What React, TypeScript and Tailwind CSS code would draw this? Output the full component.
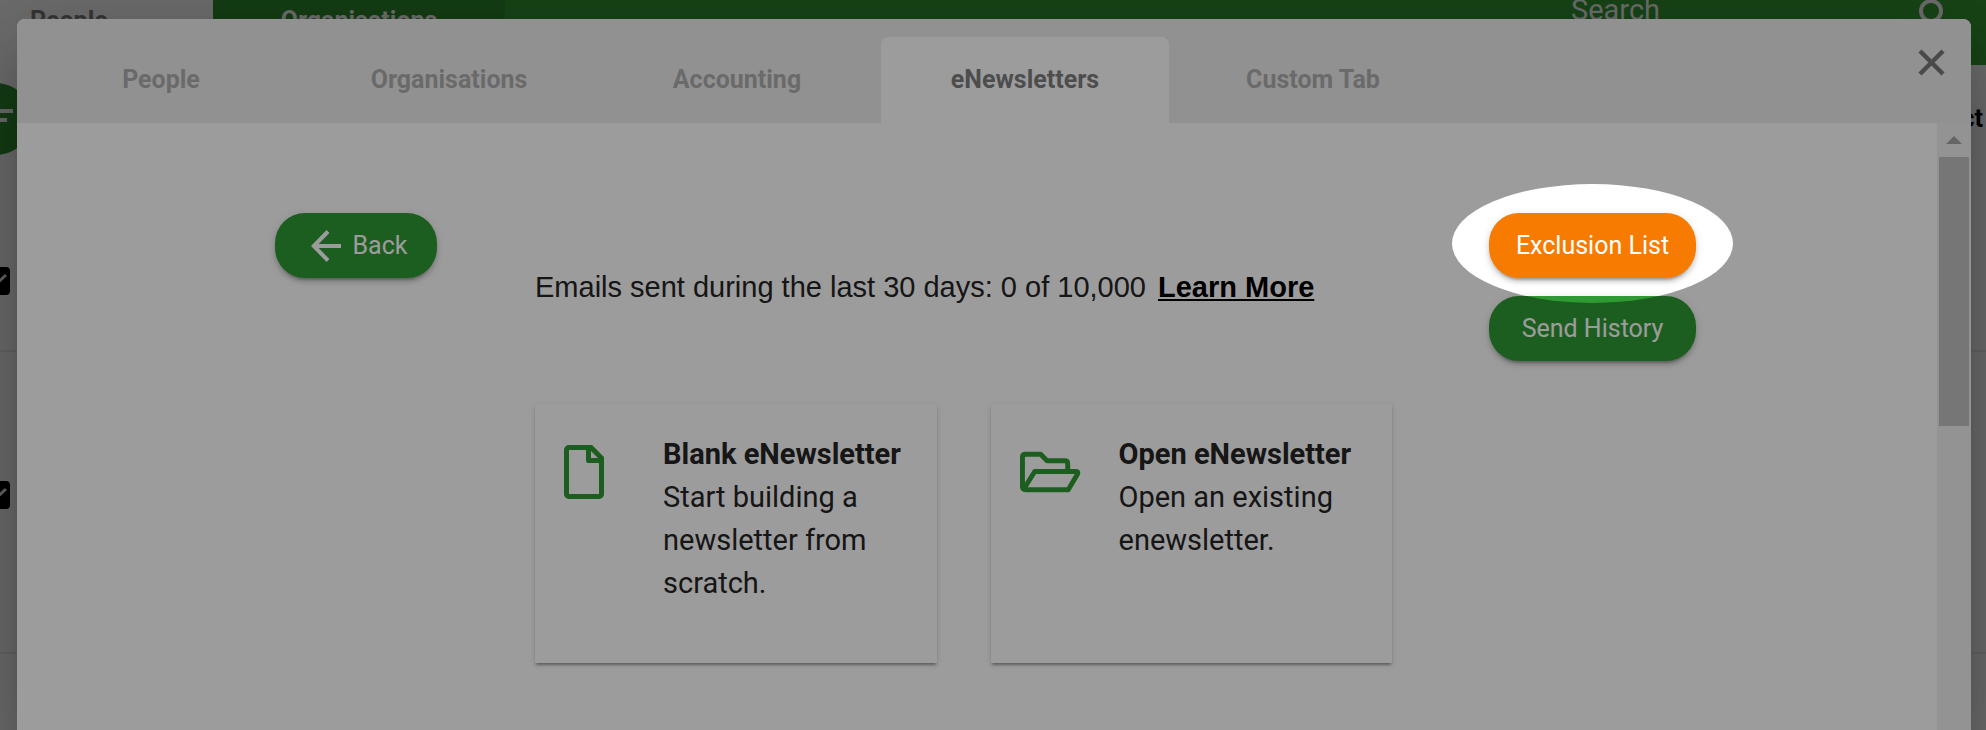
import { ReactNode } from "react";
import clsx from "clsx";

const TABS = ["People", "Organisations", "Accounting", "eNewsletters", "Custom Tab"];

const buttonShadow =
  "shadow-[0_6px_2px_-4px_rgba(0,0,0,0.2),0_4px_4px_0_rgba(0,0,0,0.14),0_2px_10px_0_rgba(0,0,0,0.12)]";

const FileIcon = () => (
  <svg width="40" height="54" viewBox="0 0 40 54" fill="none" stroke="currentColor" strokeWidth="5" aria-hidden="true">
    <path d="M5 2.5H27L37.500 13V49a2.500 2.500 0 0 1-2.500 2.500H5A2.500 2.500 0 0 1 2.500 49V5A2.500 2.500 0 0 1 5 2.500Z" />
    <path d="M24.500 3V15.500H37.500" strokeLinejoin="round" />
  </svg>
);

const FolderIcon = () => (
  <svg width="61" height="42" viewBox="0 0 62 42" fill="none" stroke="currentColor" strokeWidth="5" strokeLinejoin="round" aria-hidden="true">
    <path d="M48.500 20V12.500Q48.500 9.500 45.500 9.500H27.500L21 3H6Q2.500 3 2.500 6V36Q2.500 39 6 39H49L58.500 23Q59.500 20.500 57 20.500H15L4 38" />
  </svg>
);

const BackArrow = () => (
  <svg width="30" height="32" viewBox="0 0 30 32" fill="none" stroke="currentColor" strokeWidth="4" aria-hidden="true">
    <path d="M30 16H3M17 1.500L2.800 16L17 30.500" />
  </svg>
);

interface PillButtonProps {
  children: ReactNode;
  className?: string;
}

function PillButton({ children, className }: PillButtonProps) {
  return (
    <button
      type="button"
      className={clsx(
        "flex h-[65px] items-center justify-center gap-3 rounded-[30px] text-[25px] text-white",
        buttonShadow,
        className
      )}
    >
      {children}
    </button>
  );
}

interface OptionCardProps {
  icon: ReactNode;
  title: string;
  text: string;
}

function OptionCard({ icon, title, text }: OptionCardProps) {
  return (
    <a
      href="#"
      className="flex min-h-[259px] flex-1 items-start bg-white pt-[29px] pr-6 pl-[29px] shadow-[0_4px_2px_-2px_rgba(0,0,0,0.2),0_2px_2px_0_rgba(0,0,0,0.14),0_2px_6px_0_rgba(0,0,0,0.12)]"
    >
      <span className="flex h-[78px] w-[99px] shrink-0 items-center text-[#2f9a33]">{icon}</span>
      <span className="text-[29px] leading-[43px] text-[#242424]">
        <strong className="block font-bold whitespace-nowrap">{title}</strong>
        {text}
      </span>
    </a>
  );
}

function RowCheckbox({ label }: { label: string }) {
  return (
    <label className="relative -ml-[18px] block size-7">
      <input type="checkbox" defaultChecked aria-label={label} className="block size-7 appearance-none rounded-sm bg-black" />
      <svg className="absolute inset-0" width="28" height="28" viewBox="0 0 28 28" fill="none" stroke="#a3a3a3" strokeWidth="3" aria-hidden="true">
        <path d="M5 14L11 20L24 8" />
      </svg>
    </label>
  );
}

// The list page that sits behind the dialog
function ListPage() {
  return (
    <div className="min-h-screen bg-[#b0b0b0] text-[25px] font-bold">
      <header className="flex h-[65px] bg-[#266f24]">
        <a href="#" className="w-[213px] bg-[#b0b0b0] pl-[30px] leading-[42px] text-[#585858]">People</a>
        <a href="#" className="w-[292px] bg-[#216421] text-center leading-[42px] text-[#b0b0b0]">Organisations</a>
        <div className="ml-auto flex h-10 items-start gap-1 pr-[41px] text-[#b0b0b0]">
          <input
            type="text"
            placeholder="Search"
            aria-label="Search"
            className="h-[21px] w-[342px] text-[29px] font-normal placeholder:text-[#b0b0b0]"
          />
          <svg width="28" height="36" viewBox="0 0 28 36" fill="none" stroke="currentColor" strokeWidth="4" aria-hidden="true">
            <circle cx="14" cy="11" r="10" />
            <path d="M20 18L27 27" />
          </svg>
        </div>
      </header>
      <div className="flex h-[108px] items-center justify-between">
        <button type="button" aria-label="Filter" className="-ml-10 flex size-[72px] items-center justify-center rounded-full bg-[#216421]">
          <svg width="50" height="30" viewBox="0 0 50 30" stroke="#b0b0b0" strokeWidth="4" aria-hidden="true">
            <path d="M0 7H42M5 16H36M12 25H29" />
          </svg>
        </button>
        <span className="pr-[3px] text-black">Contact</span>
      </div>
      <div className="h-[179px] border-b-2 border-[#a4a4a4] pt-[94px]">
        <RowCheckbox label="Select first contact" />
      </div>
      <div className="h-[302px] border-b-2 border-[#a4a4a4] pt-[129px]">
        <RowCheckbox label="Select second contact" />
      </div>
    </div>
  );
}

function TabBar() {
  return (
    <div className="flex h-[104px] items-end justify-between rounded-t-lg bg-[#eeeeee]">
      <div role="tablist" className="flex w-[1440px]">
        {TABS.map((tab) => {
          const active = tab === "eNewsletters";
          return (
            <button
              key={tab}
              type="button"
              role="tab"
              aria-selected={active}
              className={clsx(
                "h-[86px] flex-1 rounded-t-lg text-[25px] font-bold",
                active ? "bg-white text-[#7f7f7f]" : "text-[#aeaeae]"
              )}
            >
              {tab}
            </button>
          );
        })}
      </div>
      <button type="button" aria-label="Close" className="mr-[26px] self-start pt-[30px] text-[#787878]">
        <svg width="27" height="27" viewBox="0 0 27 27" stroke="currentColor" strokeWidth="4.500" aria-hidden="true">
          <path d="M2 2L25 25M25 2L2 25" />
        </svg>
      </button>
    </div>
  );
}

function ScrollTrack() {
  return (
    <div className="flex w-[34px] flex-col items-center bg-[#f1f1f1]">
      <div className="flex h-[34px] items-center">
        <svg width="16" height="8" viewBox="0 0 16 8" fill="#a5a5a5" aria-hidden="true">
          <path d="M0 8L8 0L16 8Z" />
        </svg>
      </div>
      <div className="h-[269px] w-[30px] bg-[#c1c1c1]" />
    </div>
  );
}

export default function App() {
  return (
    <div className="relative h-screen overflow-hidden font-['Roboto',sans-serif]">
      <ListPage />

      <div
        role="dialog"
        aria-label="eNewsletters"
        className="absolute inset-x-0 top-[19px] bottom-0 mr-[15px] ml-[17px] flex flex-col rounded-t-lg bg-white shadow-[0_22px_30px_-14px_rgba(0,0,0,0.2),0_48px_76px_6px_rgba(0,0,0,0.14),0_18px_92px_16px_rgba(0,0,0,0.12)]"
      >
        <TabBar />
        <div className="flex flex-1">
          <main className="grid flex-1 grid-cols-[258fr_260fr_857fr_97fr_207fr_241fr] items-start pt-[90px]">
            <div className="col-start-2">
              <PillButton className="w-[162px] bg-[#2f9a33] pl-1.5">
                <BackArrow />
                Back
              </PillButton>
            </div>

            <div className="col-start-3 pt-[53px]">
              <p className="font-['Liberation_Sans',sans-serif] text-[29px] leading-[43px] text-[#242424]">
                Emails sent during the last 30 days: 0 of 10,000
                <a href="#" className="ml-3 font-bold text-black underline">Learn More</a>
              </p>
              <div className="mt-[95px] flex gap-[54px]">
                <OptionCard icon={<FileIcon />} title="Blank eNewsletter" text="Start building a newsletter from scratch." />
                <OptionCard icon={<FolderIcon />} title="Open eNewsletter" text="Open an existing enewsletter." />
              </div>
            </div>

            <div className="col-start-5 flex flex-col gap-[18px]">
              <div className="relative">
                <PillButton className="w-full bg-[#f77b00]">Exclusion List</PillButton>
                {/* Spotlight: everything outside the ellipse is dimmed */}
                <div className="pointer-events-none absolute -inset-x-[37px] -top-[29px] z-10 h-[119px] rounded-[50%] shadow-[0_0_0_3000px_rgba(0,0,0,0.39)]" />
              </div>
              <PillButton className="w-full bg-[#2f9a33]">Send History</PillButton>
            </div>
          </main>
          <ScrollTrack />
        </div>
      </div>
    </div>
  );
}
